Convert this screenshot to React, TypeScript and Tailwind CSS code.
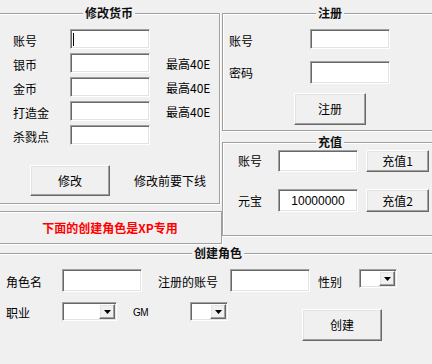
import React from "react";

const sunken =
  "bg-white border border-t-[#a0a0a0] border-l-[#a0a0a0] border-b-white border-r-white shadow-[inset_1px_1px_0_#696969,inset_-1px_-1px_0_#e3e3e3]";
const raised =
  "bg-[#f0f0f0] border border-t-white border-l-white border-b-[#696969] border-r-[#696969] shadow-[inset_-1px_-1px_0_#a0a0a0,inset_1px_1px_0_#e3e3e3] flex items-center justify-center";
const etched =
  "relative border border-[#a0a0a0] shadow-[inset_1px_1px_0_#ffffff,1px_1px_0_#ffffff]";

function Title({ children }: { children: React.ReactNode }) {
  return (
    <div className="absolute left-1/2 -translate-x-1/2 -top-[9px] px-[2px] bg-[#f0f0f0] font-bold text-[12px] leading-[16px] whitespace-nowrap text-[#101010]">
      {children}
    </div>
  );
}

function Select({ w }: { w: string }) {
  return (
    <div className={`${sunken} ${w} h-[19px] flex justify-end p-[1px]`}>
      <div className={`${raised} w-[16px] h-full`}>
        <svg width="7" height="4" viewBox="0 0 7 4">
          <path d="M0 0H7L3.5 4Z" fill="#000" />
        </svg>
      </div>
    </div>
  );
}

export default function App() {
  return (
    <div className="w-[432px] h-[364px] overflow-hidden bg-[#f0f0f0] text-black text-[12px] leading-[14px] font-['Noto_Sans_CJK_SC','Liberation_Sans',sans-serif]">
      <div className="w-[440px] -ml-[2px] pt-[13px]">
        <div className="flex">
          {/* left column */}
          <div className="w-[224px] flex flex-col">
            <div className={`${etched} w-[222px] h-[191px] pt-[15px] pl-[14px]`}>
              <Title>修改货币</Title>
              <div className="flex flex-col gap-[4px]">
                {[
                  { l: "账号", m: false, c: true },
                  { l: "银币", m: true },
                  { l: "金币", m: true },
                  { l: "打造金", m: true },
                  { l: "杀戮点", m: false },
                ].map((r) => (
                  <div key={r.l} className="flex items-center h-[20px]">
                    <div className="w-[57px] pt-[4px]">{r.l}</div>
                    <div className={`${sunken} w-[80px] h-[20px] flex items-center`}>
                      {r.c && <span className="ml-[2px] w-[1px] h-[13px] bg-black" />}
                    </div>
                    {r.m && <div className="ml-[16px] pt-[2px]">最高40E</div>}
                  </div>
                ))}
              </div>
              <div className="flex items-center mt-[20px]">
                <div className={`${raised} ml-[17px] w-[80px] h-[31px]`}>修改</div>
                <div className="ml-[24px]">修改前要下线</div>
              </div>
            </div>
            <div
              className={`${etched} mt-[7px] w-[224px] h-[33px] flex items-center justify-center font-bold text-[#ff0000]`}
            >
              下面的创建角色是XP专用
            </div>
          </div>

          {/* right column */}
          <div className="w-[216px] flex flex-col">
            <div className={`${etched} h-[118px] pt-[15px] pl-[6px]`}>
              <Title>注册</Title>
              <div className="flex items-center h-[20px]">
                <div className="w-[81px] pt-[4px]">账号</div>
                <div className={`${sunken} w-[80px] h-[20px]`} />
              </div>
              <div className="flex items-center h-[23px] mt-[12px]">
                <div className="w-[81px]">密码</div>
                <div className={`${sunken} w-[80px] h-[23px]`} />
              </div>
              <div className={`${raised} ml-[65px] mt-[9px] w-[72px] h-[32px]`}>注册</div>
            </div>
            <div className={`${etched} mt-[11px] h-[94px] pt-[7px] pl-[15px]`}>
              <Title>充值</Title>
              <div className="flex items-center h-[22px]">
                <div className="w-[40px]">账号</div>
                <div className={`${sunken} w-[80px] h-[22px]`} />
                <div className={`${raised} ml-[8px] w-[63px] h-[22px]`}>充值1</div>
              </div>
              <div className="flex items-center h-[23px] mt-[17px]">
                <div className="w-[40px]">元宝</div>
                <div
                  className={`${sunken} w-[80px] h-[23px] flex items-center justify-center font-['Liberation_Sans',sans-serif] text-[12px]`}
                >
                  10000000
                </div>
                <div className={`${raised} ml-[8px] w-[63px] h-[23px]`}>充值2</div>
              </div>
            </div>
          </div>
        </div>

        {/* create role */}
        <div className={`${etched} mt-[9px] h-[130px] pt-[15px] pl-[7px]`}>
          <Title>创建角色</Title>
          <div className="flex items-start">
            <div className="w-[56px] h-[23px] flex items-center pt-[2px]">角色名</div>
            <div className={`${sunken} w-[80px] h-[23px]`} />
            <div className="ml-[16px] w-[72px] h-[23px] flex items-center pt-[2px]">注册的账号</div>
            <div className={`${sunken} w-[80px] h-[23px]`} />
            <div className="ml-[8px] w-[41px] h-[23px] flex items-center pt-[2px]">性别</div>
            <Select w="w-[38px]" />
          </div>
          <div className="flex items-start mt-[10px]">
            <div className="w-[56px] h-[19px] flex items-center pt-[3px]">职业</div>
            <Select w="w-[55px]" />
            <div className="ml-[16px] w-[57px] h-[19px] flex items-center pt-[3px] text-[10px] font-['Liberation_Sans',sans-serif] tracking-[-0.5px]">
              GM
            </div>
            <Select w="w-[38px]" />
            <div className={`${raised} ml-[74px] mt-[7px] w-[80px] h-[32px]`}>创建</div>
          </div>
        </div>
      </div>
    </div>
  );
}
